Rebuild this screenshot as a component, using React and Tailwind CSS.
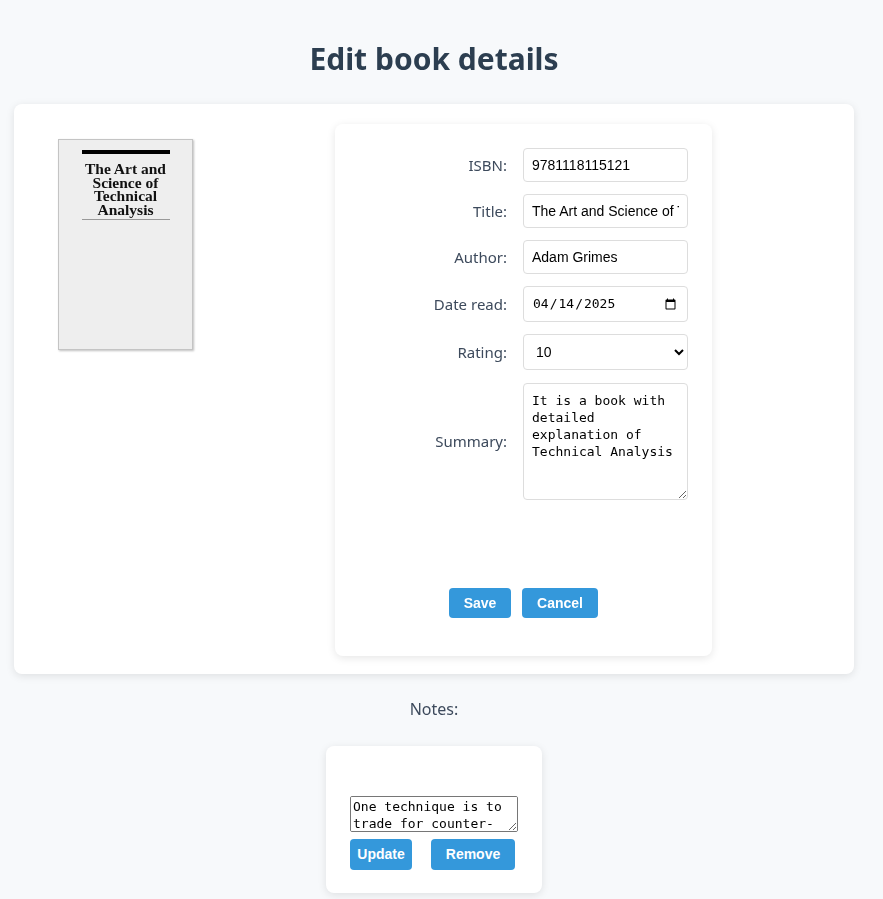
import { useState } from "react";

const labelClass = "w-[172px] text-right text-[15px] text-[#3d4a5c]";
const inputClass =
  "w-[165px] h-[34px] border border-[#dddddd] rounded-[4px] px-2 text-[14px] text-black bg-white outline-none";

function BookCover() {
  return (
    <div className="mt-[15px] w-[135px] h-[211px] bg-[#eeeeee] border border-[#c4c4c4] shadow-[1px_1px_2px_rgba(0,0,0,0.25)] flex flex-col items-center pt-[10px]">
      <div className="w-[88px] h-[4px] bg-black" />
      <div
        className="mt-[8px] w-[92px] text-center text-[15.5px] leading-[13.5px] font-bold text-[#111]"
        style={{ fontFamily: '"Liberation Serif", "DejaVu Serif", serif' }}
      >
        The Art and Science of Technical Analysis
      </div>
      <div className="mt-[3px] w-[88px] h-px bg-[#999]" />
    </div>
  );
}

function App() {
  const [rating, setRating] = useState("10");

  return (
    <div
      className="min-h-screen bg-[#f7f9fb] pb-[6px]"
      style={{ fontFamily: '"Noto Sans", "Open Sans", sans-serif' }}
    >
      <div className="w-[868px]">
        <h1 className="pt-[37px] text-center text-[30px] leading-[44px] font-bold text-[#2c3e50]">
          Edit book details
        </h1>

        <div className="mx-[14px] mt-[23px] bg-white rounded-[8px] shadow-[0_2px_8px_rgba(0,0,0,0.1)] flex items-start pt-5 pb-[18px] pl-[44px]">
          <BookCover />

          <div className="ml-[142px] w-[377px] h-[532px] bg-white rounded-[8px] shadow-[0_2px_8px_rgba(0,0,0,0.1)] pt-[24px] flex flex-col">
            <div className="flex flex-col gap-3">
              <div className="flex items-center gap-4">
                <label className={labelClass}>ISBN:</label>
                <input
                  className={inputClass}
                  style={{ fontFamily: '"Liberation Sans", Arial, sans-serif' }}
                  defaultValue="9781118115121"
                />
              </div>
              <div className="flex items-center gap-4">
                <label className={labelClass}>Title:</label>
                <input
                  className={inputClass}
                  style={{ fontFamily: '"Liberation Sans", Arial, sans-serif' }}
                  defaultValue="The Art and Science of Technical Analysis"
                />
              </div>
              <div className="flex items-center gap-4">
                <label className={labelClass}>Author:</label>
                <input
                  className={inputClass}
                  style={{ fontFamily: '"Liberation Sans", Arial, sans-serif' }}
                  defaultValue="Adam Grimes"
                />
              </div>
              <div className="flex items-center gap-4">
                <label className={labelClass}>Date read:</label>
                <input
                  type="date"
                  className="w-[165px] h-[36px] border border-[#dddddd] rounded-[4px] px-2 text-[13px] text-black bg-white outline-none"
                  style={{ fontFamily: '"DejaVu Sans Mono", monospace' }}
                  defaultValue="2025-04-14"
                />
              </div>
              <div className="flex items-center gap-4">
                <label className={labelClass}>Rating:</label>
                <select
                  value={rating}
                  onChange={(e) => setRating(e.target.value)}
                  className="w-[165px] h-[36px] border border-[#dddddd] rounded-[4px] px-2 text-[14px] text-black bg-white outline-none"
                  style={{ fontFamily: '"Liberation Sans", Arial, sans-serif' }}
                >
                  {[1, 2, 3, 4, 5, 6, 7, 8, 9, 10].map((n) => (
                    <option key={n} value={String(n)}>
                      {n}
                    </option>
                  ))}
                </select>
              </div>
              <div className="mt-px flex items-center gap-4">
                <label className={labelClass}>Summary:</label>
                <textarea
                  className="w-[165px] h-[117px] border border-[#dddddd] rounded-[4px] px-2 py-[8px] text-[13px] leading-[17px] text-black bg-white outline-none"
                  style={{ fontFamily: '"DejaVu Sans Mono", monospace' }}
                  defaultValue="It is a book with detailed explanation of Technical Analysis"
                />
              </div>
            </div>

            <div
              className="mt-[88px] flex justify-center gap-[11px]"
              style={{ fontFamily: '"Liberation Sans", Arial, sans-serif' }}
            >
              <button className="w-[62px] h-[30px] bg-[#3498db] text-white text-[14px] font-bold rounded-[4px]">
                Save
              </button>
              <button className="w-[76px] h-[30px] bg-[#3498db] text-white text-[14px] font-bold rounded-[4px]">
                Cancel
              </button>
            </div>
          </div>
        </div>

        <p className="mt-[24px] text-center text-[16px] leading-[22px] text-[#3d4a5c]">Notes:</p>

        <div className="mx-auto mt-[26px] w-[216px] h-[147px] bg-white rounded-[8px] shadow-[0_2px_8px_rgba(0,0,0,0.1)] pt-[50px] px-[24px]">
          <textarea
            className="block w-[168px] h-[36px] border border-[#767676] rounded-[2px] px-[2px] py-[1px] text-[13px] leading-[17px] text-black bg-white outline-none"
            style={{ fontFamily: '"DejaVu Sans Mono", monospace' }}
            defaultValue="One technique is to trade for counter-trend moves after a sharp climax in price action."
          />
          <div
            className="mt-[7px] flex gap-[19px]"
            style={{ fontFamily: '"Liberation Sans", Arial, sans-serif' }}
          >
            <button className="w-[62px] h-[31px] bg-[#3498db] text-white text-[14px] font-bold rounded-[4px]">
              Update
            </button>
            <button className="w-[84px] h-[31px] bg-[#3498db] text-white text-[14px] font-bold rounded-[4px]">
              Remove
            </button>
          </div>
        </div>
      </div>
    </div>
  );
}

export default App;
